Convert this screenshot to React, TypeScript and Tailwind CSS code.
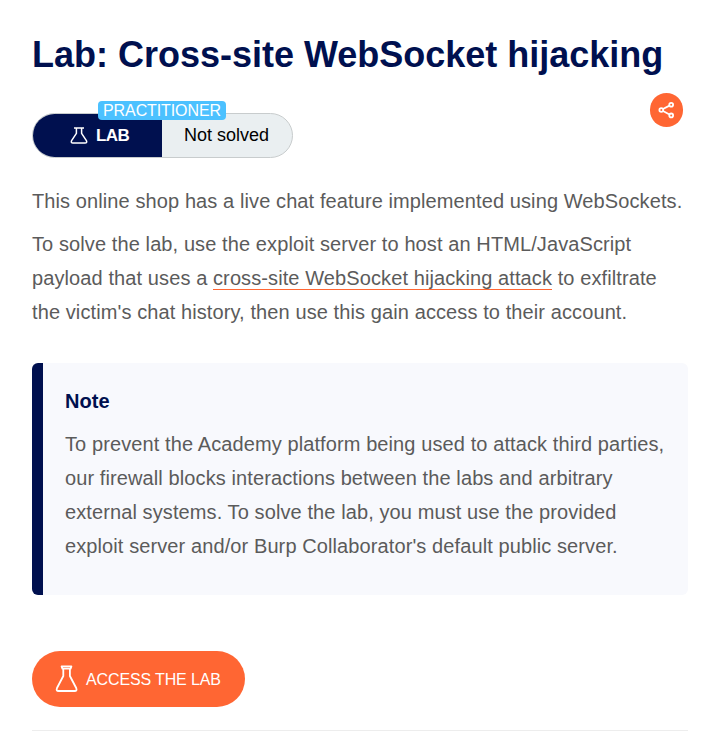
import React from "react";

function Share() {
  return (
    <svg width="34" height="34" viewBox="0 0 34 34" fill="none" stroke="#fff" strokeWidth="1.8">
      <circle cx="11.3" cy="17" r="1.9" />
      <circle cx="21.2" cy="11.8" r="1.9" />
      <circle cx="21.2" cy="22.4" r="1.9" />
      <path d="M13 16 L19.5 12.6 M13 18 L19.5 21.5" />
    </svg>
  );
}

function SmallFlask() {
  return (
    <svg className="shrink-0" width="18" height="18" viewBox="0 0 18 18" fill="none" stroke="#fff" strokeWidth="1.5" strokeLinejoin="round">
      <path d="M4 1H14M6.4 1V6.4L1.6 13.6Q.5 16 3 16H15Q17.5 16 16.4 13.6L11.6 6.4V1" />
    </svg>
  );
}

function LargeFlask() {
  return (
    <svg className="shrink-0" width="24" height="28" viewBox="0 0 24 28" fill="none" stroke="#fff" strokeWidth="1.8" strokeLinejoin="round" strokeLinecap="round">
      <path d="M6.6 1.4H16.4L15.6 3.6H7.4ZM8.3 3.6V11L2 23Q.8 26 3.6 26H19.6Q22.4 26 21.2 23L14.9 11V3.6" />
    </svg>
  );
}

export default function App() {
  return (
    <main className="h-[731px] w-[715px] overflow-hidden bg-white pl-8 pr-[27px] font-['Liberation_Sans',Arial,sans-serif] text-xl leading-[34px] tracking-[0.1px] text-[#5b5b5b]">
      <h1 className="pt-[35px] text-[36px] font-bold leading-[40px] tracking-[-0.01px] whitespace-nowrap text-[#00104f]">
        Lab: Cross-site WebSocket hijacking
      </h1>
      <div className="mt-[18px] flex h-[65px] items-start justify-between pr-[5px]">
        <div className="relative mt-5 flex h-[45px] w-[261px] overflow-visible rounded-full border border-[#c8cccd] bg-[#eaeff1] text-lg leading-[43px] tracking-normal">
          <div className="flex w-[129px] items-center gap-2 rounded-l-full bg-[#00104f] pl-[37px] text-[17px] font-bold tracking-[-0.6px] text-white">
            <SmallFlask />
            <span>LAB</span>
          </div>
          <span className="ml-[22px] whitespace-nowrap text-black">Not solved</span>
          <span className="absolute left-[65px] -top-[13px] h-[19px] w-[128px] rounded-[4px] bg-[#4cc1ff] text-center text-base leading-[19px] tracking-[-0.1px] text-white">PRACTITIONER</span>
        </div>
        <button className="h-[34px] w-[33px] overflow-hidden rounded-full bg-[#ff6633]"><Share /></button>
      </div>
      <p className="mt-[26px] whitespace-nowrap">This online shop has a live chat feature implemented using WebSockets.</p>
      <p className="mt-[9px] whitespace-nowrap">
        To solve the lab, use the exploit server to host an HTML/JavaScript<br />
        payload that uses a <a className="border-b border-[#ff6633]">cross-site WebSocket hijacking attack</a> to exfiltrate<br />
        the victim's chat history, then use this gain access to their account.
      </p>
      <section className="mt-[34px] h-[232px] rounded-md border-l-[11px] border-[#00104f] bg-[#f8f9fd] pt-[21px] pl-[22px]">
        <h2 className="font-bold text-[#00104f]">Note</h2>
        <p className="mt-[9px] whitespace-nowrap">
          To prevent the Academy platform being used to attack third parties,<br />
          our firewall blocks interactions between the labs and arbitrary<br />
          external systems. To solve the lab, you must use the provided<br />
          exploit server and/or Burp Collaborator's default public server.
        </p>
      </section>
      <button className="mt-14 flex h-14 w-[213px] items-center gap-[7px] rounded-full bg-[#ff6633] pl-[23px] text-base tracking-[-0.13px] whitespace-nowrap text-white">
        <LargeFlask />
        <span className="pt-px">ACCESS THE LAB</span>
      </button>
      <hr className="mt-[23px] border-[#ededed]" />
    </main>
  );
}
